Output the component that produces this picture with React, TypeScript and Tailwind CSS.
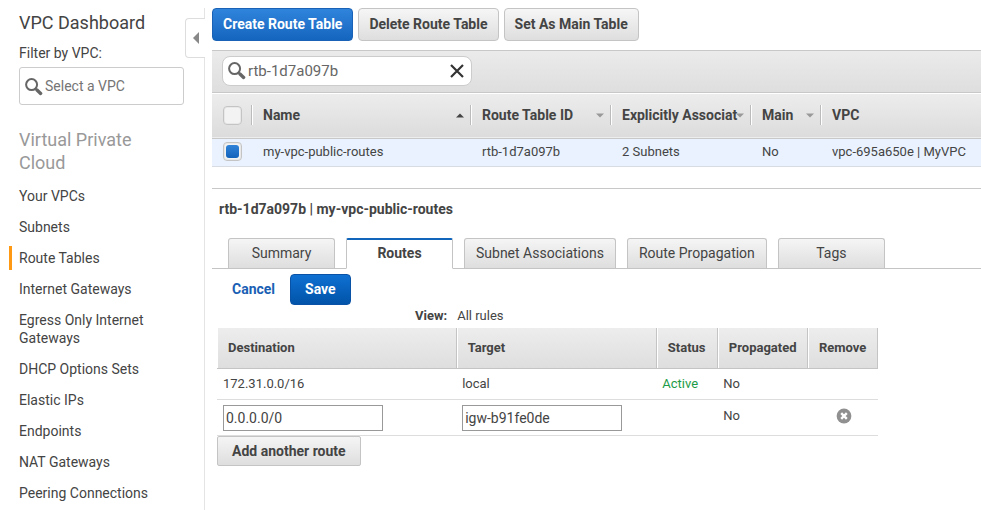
import { ReactNode } from "react";

type NavItem = { label: string; active?: boolean };

const navItems: NavItem[] = [
  { label: "Your VPCs" },
  { label: "Subnets" },
  { label: "Route Tables", active: true },
  { label: "Internet Gateways" },
  { label: "Egress Only Internet Gateways" },
  { label: "DHCP Options Sets" },
  { label: "Elastic IPs" },
  { label: "Endpoints" },
  { label: "NAT Gateways" },
  { label: "Peering Connections" },
];

const tabs = ["Summary", "Routes", "Subnet Associations", "Route Propagation", "Tags"];

function SearchIcon() {
  return (
    <svg viewBox="0 0 18 18" className="h-[18px] w-[18px] shrink-0" fill="none" stroke="#666" aria-hidden="true">
      <circle cx="6.6" cy="6.6" r="5.5" strokeWidth="2" />
      <path d="M10.6 10.6l2 2" strokeWidth="2" />
      <path d="M12 12l3.6 3.4" strokeWidth="3.4" strokeLinecap="round" />
    </svg>
  );
}

function Sidebar() {
  return (
    <nav className="w-[204px] shrink-0 pb-2" aria-label="VPC">
      <div className="pr-5 pl-[19px]">
        <h1 className="pt-1 text-[18px] leading-[22px]">
          <a href="#dashboard">VPC Dashboard</a>
        </h1>
        <label htmlFor="vpc-filter" className="block pt-[10px] pb-[5px] leading-[18px]">
          Filter by VPC:
        </label>
        <div className="flex h-[38px] w-[165px] items-center rounded-[3px] border border-[#ccc] pt-px pl-[5px]">
          <SearchIcon />
          <input
            id="vpc-filter"
            placeholder="Select a VPC"
            className="ml-[2px] w-full min-w-0 bg-transparent outline-none placeholder:text-[#757575]"
          />
        </div>
        <h2 className="pt-[23px] pr-5 text-[18px] leading-[23px] text-[#999]">Virtual Private Cloud</h2>
      </div>
      <ul className="mt-[10px] ml-[9px] flex flex-col gap-[7px] pr-10">
        {navItems.map((item) => (
          <li key={item.label}>
            <a
              href="#nav"
              aria-current={item.active ? "page" : undefined}
              className={`block border-l-[3px] py-[3px] pl-[7px] leading-[18px] ${
                item.active ? "border-[#ff9914]" : "border-transparent"
              }`}
            >
              {item.label}
            </a>
          </li>
        ))}
      </ul>
    </nav>
  );
}

function ToolButton({ children, primary }: { children: ReactNode; primary?: boolean }) {
  return (
    <button
      type="button"
      className={`h-[33px] rounded-[4px] border px-[10px] pb-px font-bold whitespace-nowrap ${
        primary
          ? "border-[#1a62b5] bg-linear-to-b from-[#3084dc] to-[#1465bd] text-white"
          : "border-[#c4c4c4] bg-linear-to-b from-[#f6f6f6] to-[#dedede]"
      }`}
    >
      {children}
    </button>
  );
}

function SortArrow({ up }: { up?: boolean }) {
  return (
    <svg viewBox="0 0 8 5" className="h-[5px] w-2 shrink-0" aria-hidden="true">
      {up ? <path d="M0 4.5L4 0.5L8 4.5z" fill="#444" /> : <path d="M0 0.5L4 4.5L8 0.5z" fill="#999" />}
    </svg>
  );
}

function ListHeader({ label, sort, width }: { label: string; sort?: "up" | "down"; width: string }) {
  return (
    <th scope="col" className={`p-0 text-left text-[14px] font-bold ${width}`}>
      <div className="flex h-5 items-center border-l border-[#bbb] pr-[6px] shadow-[inset_1px_0_0_#fff]">
        <button type="button" className="ml-[11px] min-w-0 flex-1 text-left whitespace-nowrap">
          {label}
        </button>
        {sort && <SortArrow up={sort === "up"} />}
      </div>
    </th>
  );
}

const boxClass =
  "block h-[19px] w-[19px] appearance-none rounded-[4px] border border-[#c4c4c4] bg-[#f3f3f3] shadow-[inset_0_0_0_1px_#e8e8e8]";

function RouteTableList() {
  return (
    <table className="w-full table-fixed border-collapse text-[13px]">
      <thead>
        <tr className="h-[45px] border-b border-[#c8c8c8] bg-linear-to-b from-[#ededed] to-[#dcdcdc] shadow-[inset_0_1px_0_#fff]">
          <th className="w-[39px] p-0 pl-[11px]">
            <input type="checkbox" aria-label="Select all route tables" className={boxClass} />
          </th>
          <ListHeader label="Name" sort="up" width="w-[219px]" />
          <ListHeader label="Route Table ID" sort="down" width="w-[140px]" />
          <ListHeader label="Explicitly Associat" sort="down" width="w-[140px]" />
          <ListHeader label="Main" sort="down" width="w-[70px]" />
          <ListHeader label="VPC" width="w-auto" />
        </tr>
      </thead>
      <tbody>
        <tr className="h-[28px] border-b border-[#d8dce2] bg-[#e9f2fe]">
          <td className="p-0 pb-px pl-[11px]">
            <span className="relative block h-[19px] w-[19px]">
              <input type="checkbox" defaultChecked aria-label="Select my-vpc-public-routes" className={boxClass} />
              <span className="pointer-events-none absolute inset-[3px] rounded-[3px] bg-linear-to-b from-[#2f82d8] to-[#1463bb]" />
            </span>
          </td>
          <td className="p-0 pl-3">my-vpc-public-routes</td>
          <td className="p-0 pl-3">rtb-1d7a097b</td>
          <td className="p-0 pl-3">2 Subnets</td>
          <td className="p-0 pl-3">No</td>
          <td className="p-0 pl-3 whitespace-nowrap">vpc-695a650e | MyVPC</td>
        </tr>
      </tbody>
    </table>
  );
}

function Tabs() {
  return (
    <div role="tablist" className="mt-5 flex gap-[11px] border-b border-[#c4c4c4] pl-4">
      {tabs.map((tab) => {
        const active = tab === "Routes";
        return (
          <button
            key={tab}
            type="button"
            role="tab"
            aria-selected={active}
            className={`min-w-[107px] border px-[11px] whitespace-nowrap ${
              active
                ? "-mb-px h-[31px] rounded-t-[2px] border-t-2 border-x-[#c4c4c4] border-t-[#1166bb] border-b-white bg-white font-bold"
                : "h-[30px] rounded-t-[3px] border-[#c4c4c4] border-b-0 bg-linear-to-b from-[#f5f5f5] to-[#dedede]"
            }`}
          >
            {tab}
          </button>
        );
      })}
    </div>
  );
}

function RouteHeader({ label, width }: { label: string; width: string }) {
  return (
    <th
      scope="col"
      className={`border-r border-[#c4c4c4] p-0 pl-[11px] text-left font-bold shadow-[inset_1px_0_0_#fff] ${width}`}
    >
      {label}
    </th>
  );
}

function RoutesEditor() {
  const inputClass = "block h-[26px] w-[160px] border border-[#999] bg-white px-[2px] text-[14px] outline-none";
  return (
    <div className="pl-[5px]">
      <div className="flex items-center pt-[5px] pl-[15px]">
        <button type="button" className="mr-[15px] font-bold text-[#1a5fb4]">
          Cancel
        </button>
        <button
          type="button"
          className="h-[31px] rounded-[4px] border border-[#0a52a5] bg-linear-to-b from-[#0f70d2] to-[#0254a8] px-[14px] font-bold text-white"
        >
          Save
        </button>
      </div>
      <div className="flex h-[23px] items-center gap-[10px] pl-[198px] text-[13px]">
        <span className="font-bold">View:</span>
        <span>All rules</span>
      </div>
      <table className="w-[661px] table-fixed border-collapse text-[13px]">
        <thead>
          <tr className="h-[41px] border-b border-[#c4c4c4] bg-linear-to-b from-[#ededed] to-[#dedede]">
            <RouteHeader label="Destination" width="w-[239px]" />
            <RouteHeader label="Target" width="w-[200px]" />
            <RouteHeader label="Status" width="w-[61px]" />
            <RouteHeader label="Propagated" width="w-[90px]" />
            <RouteHeader label="Remove" width="w-[70px]" />
          </tr>
        </thead>
        <tbody>
          <tr className="h-[31px] border-b border-[#ddd]">
            <td className="p-0 pl-[6px]">172.31.0.0/16</td>
            <td className="p-0 pl-[6px]">local</td>
            <td className="p-0 pl-[6px] text-[#1d9b48]">Active</td>
            <td className="p-0 pl-[6px]">No</td>
            <td className="p-0" />
          </tr>
          <tr className="h-[36px] border-b border-[#ddd]">
            <td className="p-0 pl-[6px]">
              <input aria-label="Destination" defaultValue="0.0.0.0/0" className={inputClass} />
            </td>
            <td className="p-0 pl-[6px]">
              <input aria-label="Target" defaultValue="igw-b91fe0de" className={inputClass} />
            </td>
            <td className="p-0" />
            <td className="p-0 pb-1 pl-[6px]">No</td>
            <td className="p-0 pb-1 pl-[3px]">
              <button type="button" aria-label="Remove route" className="mx-auto block">
                <svg viewBox="0 0 16 16" className="h-4 w-4">
                  <circle cx="8" cy="8" r="7.4" fill="#909090" />
                  <path d="M5.2 5.2l5.6 5.6M10.8 5.2l-5.6 5.6" stroke="#fff" strokeWidth="2.4" />
                </svg>
              </button>
            </td>
          </tr>
        </tbody>
      </table>
      <button
        type="button"
        className="h-[30px] rounded-[2px] border border-[#c4c4c4] bg-linear-to-b from-[#f5f5f5] to-[#dedede] px-[14px] font-bold"
      >
        Add another route
      </button>
    </div>
  );
}

export default function App() {
  return (
    <div className="flex min-h-screen bg-white pt-2 font-[Roboto,'Liberation_Sans',sans-serif] text-[14px] text-[#444]">
      <Sidebar />
      <main className="relative min-w-0 flex-1 border-l border-[#e4e4e4] pl-[7px]">
        <button
          type="button"
          aria-label="Collapse navigation"
          className="absolute top-[10px] -left-5 flex h-10 w-5 items-center justify-center rounded-l-[4px] border border-r-0 border-[#ddd] bg-white"
        >
          <svg viewBox="0 0 6 12" className="h-3 w-[6px]">
            <path d="M6 0v12L0 6z" fill="#888" />
          </svg>
        </button>
        <div className="flex gap-[5px]">
          <ToolButton primary>Create Route Table</ToolButton>
          <ToolButton>Delete Route Table</ToolButton>
          <ToolButton>Set As Main Table</ToolButton>
        </div>
        <div className="mt-[9px] h-[43px] border-y border-[#c8c8c8] bg-linear-to-b from-[#ebebeb] to-[#dedede] pt-[5px] pl-[10px]">
          <div className="flex h-[30px] w-[250px] items-center rounded-[8px] border border-[#ccc] bg-white pr-[7px] pl-[5px]">
            <SearchIcon />
            <input
              aria-label="Search route tables"
              defaultValue="rtb-1d7a097b"
              className="ml-[2px] min-w-0 flex-1 bg-transparent text-[15px] text-[#666] outline-none"
            />
            <button type="button" aria-label="Clear search">
              <svg viewBox="0 0 14 14" className="h-[14px] w-[14px]">
                <path d="M1 1l12 12M13 1L1 13" stroke="#333" strokeWidth="2.2" />
              </svg>
            </button>
          </div>
        </div>
        <RouteTableList />
        <section className="mt-[21px] border-t border-[#c8c8c8]">
          <h2 className="pt-[11px] pl-[7px] leading-[18px] font-bold">rtb-1d7a097b | my-vpc-public-routes</h2>
          <Tabs />
          <RoutesEditor />
        </section>
      </main>
    </div>
  );
}
